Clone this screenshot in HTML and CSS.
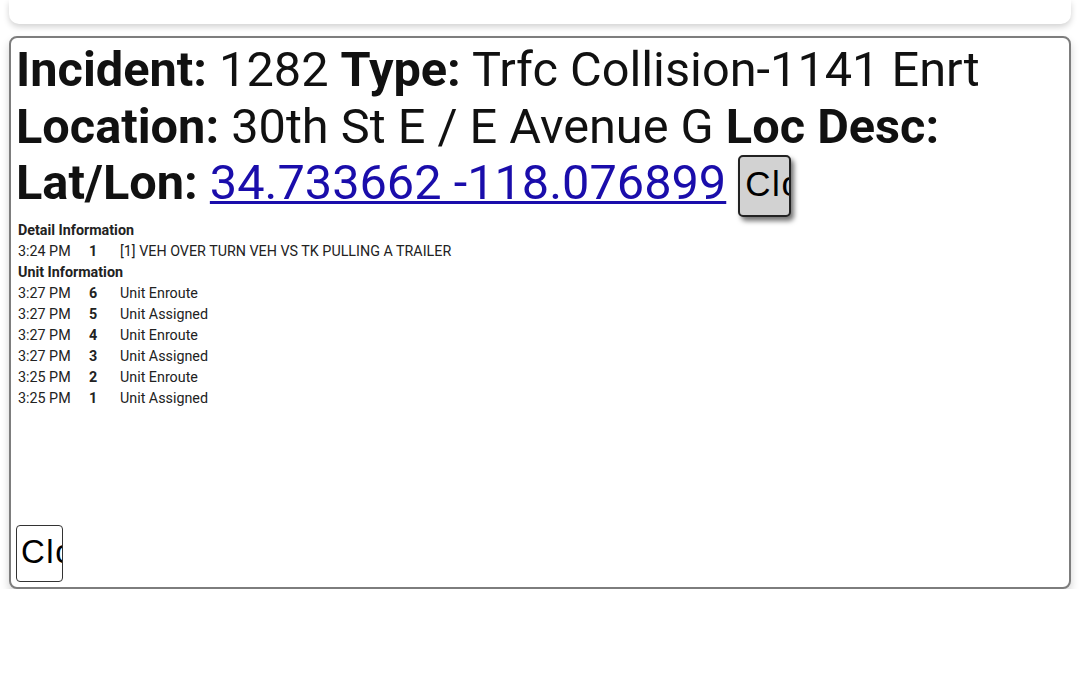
FILE: index.html
```html
<!DOCTYPE html>
<html>
<head>
<meta charset="utf-8">
<link rel="stylesheet" href="styles.css">
</head>
<body>
<div class="page">
  <div class="topcard"></div>
  <div class="card">
    <div class="headline">
      <div class="hline"><b>Incident:</b> 1282 <b>Type:</b> Trfc Collision-1141 Enrt</div>
      <div class="hline"><b>Location:</b> 30th St E / E Avenue G <b>Loc Desc:</b></div>
      <div class="hline"><b>Lat/Lon:</b> <a class="coords" href="#">34.733662 -118.076899</a> <button class="btn-map">Close</button></div>
    </div>
    <div class="info">
      <div class="section-title">Detail Information</div>
      <table class="log">
        <tr><td class="t">3:24 PM</td><td class="n">1</td><td class="d">[1] VEH OVER TURN VEH VS TK PULLING A TRAILER</td></tr>
      </table>
      <div class="section-title">Unit Information</div>
      <table class="log">
        <tr><td class="t">3:27 PM</td><td class="n">6</td><td class="d">Unit Enroute</td></tr>
        <tr><td class="t">3:27 PM</td><td class="n">5</td><td class="d">Unit Assigned</td></tr>
        <tr><td class="t">3:27 PM</td><td class="n">4</td><td class="d">Unit Enroute</td></tr>
        <tr><td class="t">3:27 PM</td><td class="n">3</td><td class="d">Unit Assigned</td></tr>
        <tr><td class="t">3:25 PM</td><td class="n">2</td><td class="d">Unit Enroute</td></tr>
        <tr><td class="t">3:25 PM</td><td class="n">1</td><td class="d">Unit Assigned</td></tr>
      </table>
    </div>
    <div class="footer">
      <button class="btn-close">Close</button>
    </div>
  </div>
</div>
</body>
</html>
```

FILE: styles.css
```css
html, body {
  margin: 0;
  padding: 0;
  background: #ffffff;
}
body {
  font-family: Roboto, "Liberation Sans", Arial, sans-serif;
  color: #111;
}
.page {
  padding: 0 9px;
  display: flex;
  flex-direction: column;
}
.topcard {
  height: 24px;
  background: #fff;
  border-radius: 0 0 10px 10px;
  box-shadow: 0 3px 6px rgba(0,0,0,0.18);
}
.card {
  margin-top: 12px;
  border: 2px solid #7d7d7d;
  border-radius: 8px;
  background: #fff;
  box-shadow: 0 5px 9px rgba(0,0,0,0.18);
  padding: 4px 7px 5px 5px;
  display: flex;
  flex-direction: column;
  box-sizing: border-box;
  height: 553px;
}
.headline {
  font-size: 48.7px;
  line-height: 56.5px;
  color: #111;
}
.hline {
  white-space: nowrap;
}
.hline b {
  font-weight: 700;
}
.coords {
  color: #1a0dab;
  text-decoration: underline;
  text-decoration-thickness: 3px;
}
.btn-map {
  vertical-align: top;
  width: 53px;
  height: 62px;
  box-sizing: border-box;
  border: 2px solid #222;
  border-radius: 5px;
  background: #d2d2d2;
  box-shadow: 3px 4px 5px rgba(0,0,0,0.55);
  font-family: "Liberation Sans", Arial, sans-serif;
  font-size: 35px;
  letter-spacing: 1.5px;
  color: #000;
  padding: 7px 0 0 5px;
  text-align: left;
  overflow: hidden;
  white-space: nowrap;
  line-height: normal;
  display: inline-flex;
  align-items: flex-start;
  margin-left: 0;
}
.info {
  font-size: 14.3px;
  color: #222;
  margin-top: 3px;
  padding-left: 2px;
}
.section-title {
  font-weight: 700;
  height: 21px;
  line-height: 21px;
  color: #222;
}
.log {
  border-collapse: collapse;
}
.log td {
  padding: 0;
  height: 21px;
  line-height: 21px;
  vertical-align: middle;
  white-space: nowrap;
}
.log .t {
  width: 71px;
}
.log .n {
  width: 31px;
  font-weight: 700;
}
.footer {
  margin-top: auto;
}
.btn-close {
  display: inline-flex;
  align-items: flex-start;
  width: 47px;
  height: 57px;
  box-sizing: border-box;
  border: 1px solid #333;
  border-radius: 4px;
  background: #fff;
  font-family: "Liberation Sans", Arial, sans-serif;
  font-size: 33px;
  letter-spacing: 1.5px;
  color: #000;
  padding: 7px 0 0 4px;
  text-align: left;
  overflow: hidden;
  white-space: nowrap;
  line-height: normal;
}
```
